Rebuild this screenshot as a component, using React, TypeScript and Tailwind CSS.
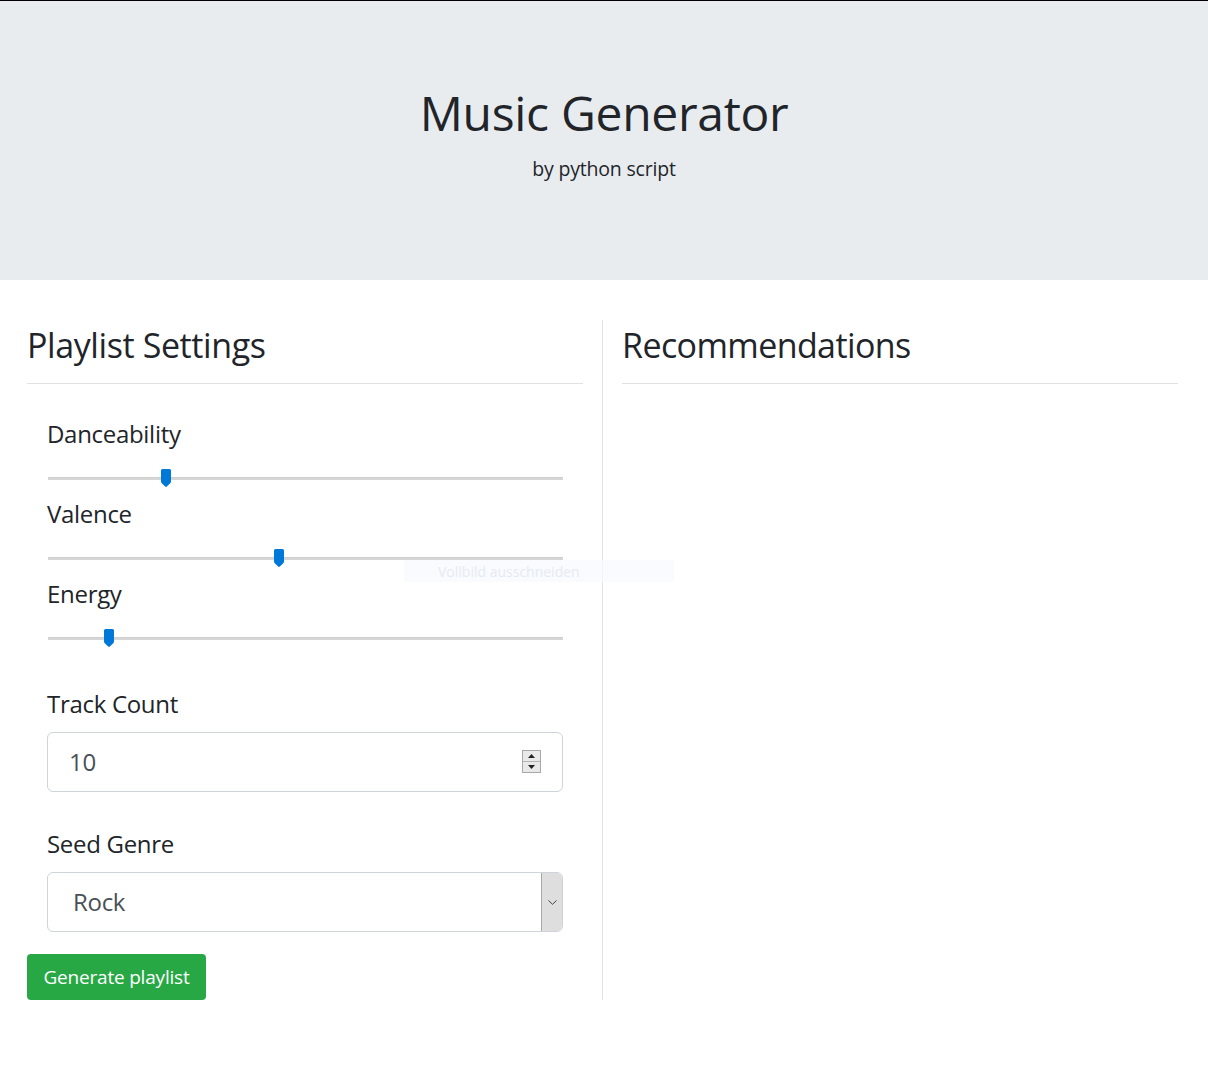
import React from "react";

const font = { fontFamily: '"Open Sans", "Noto Sans", sans-serif' };

function Thumb() {
  return (
    <svg width="10" height="18" viewBox="0 0 10 18">
      <path d="M1.5 0 H8.5 A1.5 1.5 0 0 1 10 1.5 V12.5 Q10 13.5 9 14.5 L5.8 17.6 Q5 18.2 4.2 17.6 L1 14.5 Q0 13.5 0 12.5 V1.5 A1.5 1.5 0 0 1 1.5 0 Z" fill="#0078d7" />
    </svg>
  );
}

function Slider({ label, value, first }: { label: string; value: number; first?: boolean }) {
  return (
    <div className={first ? "" : "mt-[8px]"}>
      <div className="text-[24px] leading-[36px] text-[#212529] tracking-[-0.3px]">{label}</div>
      <div className="relative mt-[16px] h-[20px]">
        <div className="absolute left-[1px] right-0 top-[9px] h-[3px] bg-[#d6d6d6] border-t border-[#cfcfcf]" />
        <div className="absolute top-[1px]" style={{ left: `calc(${value * 100}% - ${value * 10}px)` }}>
          <Thumb />
        </div>
      </div>
    </div>
  );
}

export default function App() {
  return (
    <div className="w-[1208px] min-h-[1080px] bg-white text-[#212529] border-t border-black" style={font}>
      <div className="h-[279px] bg-[#e9ecef] flex flex-col items-center">
        <h1 className="mt-[82px] text-[48px] leading-[60px] font-normal tracking-[-0.3px] text-[#212529]">Music Generator</h1>
        <p className="mt-[12px] text-[19.5px] leading-[28px] tracking-[-0.2px] text-[#212529]">by python script</p>
      </div>
      <div className="flex mt-[40px] relative">
        <div className="w-[603px] pl-[27px] pr-[19px] border-r border-[#e3e3e3] pb-0">
          <h2 className="text-[34px] leading-[50px] font-normal tracking-[-0.4px]">Playlist Settings</h2>
          <div className="mt-[13px] border-t border-[#e2e2e2]" />
          <div className="px-[20px] mt-[32px]">
            <Slider label="Danceability" value={0.225} first />
            <Slider label="Valence" value={0.448} />
            <Slider label="Energy" value={0.113} />
            <div className="mt-[38px] text-[24px] leading-[36px] tracking-[-0.3px]">Track Count</div>
            <div className="relative mt-[10px] h-[60px] border border-[#ced4da] rounded-[6px] flex items-center pl-[21px]">
              <span className="text-[24px] text-[#495057] tracking-[-0.3px]">10</span>
              <div className="absolute right-[21px] top-[17px] w-[19px] h-[23px] border border-[#a9a9a9] bg-[#e9e9e9] flex flex-col">
                <div className="flex-1 flex items-center justify-center border-b border-[#b5b5b5]">
                  <svg width="7" height="4" viewBox="0 0 7 4"><path d="M3.5 0 L7 4 H0 Z" fill="#222" /></svg>
                </div>
                <div className="flex-1 flex items-center justify-center">
                  <svg width="7" height="4" viewBox="0 0 7 4"><path d="M0 0 H7 L3.5 4 Z" fill="#222" /></svg>
                </div>
              </div>
            </div>
            <div className="mt-[34px] text-[24px] leading-[36px] tracking-[-0.3px]">Seed Genre</div>
            <div className="mt-[10px] h-[60px] border border-[#ced4da] rounded-[6px] flex items-stretch overflow-hidden">
              <div className="flex-1 flex items-center pl-[25px] text-[24px] text-[#495057] tracking-[-0.3px]">Rock</div>
              <div className="w-[21px] bg-[#dedede] border-l border-[#a9a9a9] flex items-center justify-center">
                <svg width="9" height="5" viewBox="0 0 9 5"><path d="M0.5 0.5 L4.5 4.3 L8.5 0.5" fill="none" stroke="#444" strokeWidth="1" /></svg>
              </div>
            </div>
          </div>
          <button className="mt-[22px] h-[46px] w-[179px] bg-[#28a745] text-white text-[19px] rounded-[4px] tracking-[-0.2px]">Generate playlist</button>
        </div>
        <div className="w-[556px] ml-[19px]">
          <h2 className="text-[34px] leading-[50px] font-normal tracking-[-0.6px]">Recommendations</h2>
          <div className="mt-[13px] border-t border-[#e2e2e2]" />
        </div>
        <div className="absolute left-[404px] top-[240px] w-[270px] h-[22px] bg-[#f7f9fe]/70 flex items-center pl-[34px] text-[14px] text-[#e6eaf3]">
          Vollbild ausschneiden
        </div>
      </div>
    </div>
  );
}
